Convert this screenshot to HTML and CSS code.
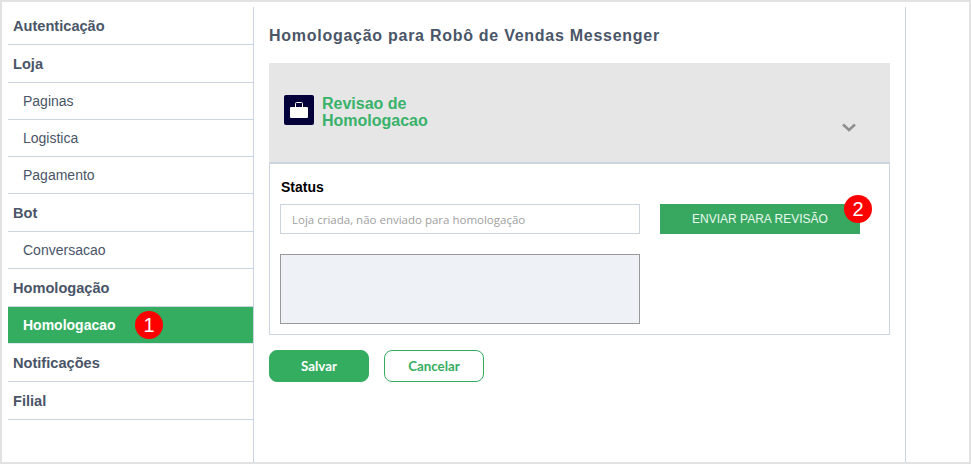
FILE: index.html
```html
<!DOCTYPE html>
<html lang="pt-BR">
<head>
    <meta charset="UTF-8">
    <meta name="viewport" content="width=device-width, initial-scale=1.0">
    <title>Homologação</title>
    <link rel="stylesheet" href="styles.css">
</head>
<body>

<div class="frame">
    <nav class="sidebar">
        <a class="item group">Autenticação</a>
        <a class="item group">Loja</a>
        <a class="item sub">Paginas</a>
        <a class="item sub">Logistica</a>
        <a class="item sub">Pagamento</a>
        <a class="item group">Bot</a>
        <a class="item sub">Conversacao</a>
        <a class="item group">Homologação</a>
        <a class="item sub active">Homologacao<span class="badge badge-menu">1</span></a>
        <a class="item group">Notificações</a>
        <a class="item group">Filial</a>
    </nav>

    <main class="content">
        <h1 class="title">Homologação para Robô de Vendas Messenger</h1>

        <section class="panel">
            <header class="panel-header">
                <div class="panel-icon">
                    <svg width="18" height="16" viewBox="0 0 18 16">
                        <path d="M5.5 5V1.5A1 1 0 0 1 6.5.5h5a1 1 0 0 1 1 1V5" fill="none" stroke="#fff" stroke-width="1"/>
                        <rect y="5" width="18" height="11" rx="1" fill="#fff"/>
                    </svg>
                </div>
                <div class="panel-title">Revisao de<br>Homologacao</div>
                <svg class="chevron" width="14" height="9" viewBox="0 0 14 9">
                    <path d="M1 1.5l6 5.5 6-5.5" fill="none" stroke="#8f8f8f" stroke-width="2.6"/>
                </svg>
            </header>

            <div class="panel-body">
                <label class="status-label">Status</label>
                <div class="status-row">
                    <input class="status-input" type="text" placeholder="Loja criada, não enviado para homologação" disabled>
                    <button class="send">ENVIAR PARA REVISÃO<span class="badge badge-send">2</span></button>
                </div>
                <textarea class="notes" disabled></textarea>
            </div>
        </section>

        <div class="actions">
            <button class="btn btn-save">Salvar</button>
            <button class="btn btn-cancel">Cancelar</button>
        </div>
    </main>
</div>

</body>
</html>
```

FILE: styles.css
```css
* {
    box-sizing: border-box;
}

body {
    margin: 0;
    font-family: "Liberation Sans", Arial, sans-serif;
    background-color: #fff;
}

.frame {
    display: flex;
    height: 464px;
    padding: 5px 0 0 6px;
    border: 2px solid #e2e2e2;
}

.sidebar {
    width: 246px;
    flex-shrink: 0;
    display: flex;
    flex-direction: column;
    border-right: 1px solid #cbd5e0;
}

.item {
    position: relative;
    display: flex;
    align-items: center;
    width: 245px;
    border-bottom: 1px solid #cbd5e0;
    color: #4a5568;
}

.group {
    height: 38px;
    padding-left: 5px;
    font-size: 14.6px;
    font-weight: bold;
}

.sub {
    height: 37px;
    padding-left: 15px;
    font-size: 14px;
}

.active {
    background-color: #34ad60;
    color: #fff;
    font-weight: bold;
    border-bottom: 1px solid #e2e8f0;
}

.badge {
    position: absolute;
    width: 28px;
    height: 28px;
    border-radius: 50%;
    background-color: #f00;
    color: #fff;
    font-family: "Liberation Sans", Arial, sans-serif;
    font-size: 20px;
    font-weight: normal;
    line-height: 28px;
    text-align: center;
}

.badge-menu {
    left: 127px;
    top: 4px;
}

.badge-send {
    right: -12px;
    top: -9px;
}

.content {
    width: 652px;
    flex-shrink: 0;
    padding: 0 15px;
    border-right: 1px solid #cbd5e0;
}

.title {
    margin: 20px 0 18px;
    font-size: 16px;
    line-height: 18px;
    font-weight: bold;
    letter-spacing: 0.73px;
    color: #4a5568;
}

.panel-header {
    position: relative;
    display: flex;
    align-items: center;
    height: 101px;
    padding: 0 0 6px 15px;
    background-color: #e6e6e6;
    border-bottom: 2px solid #cbd5e0;
}

.panel-icon {
    display: flex;
    align-items: center;
    justify-content: center;
    width: 30px;
    height: 30px;
    border-radius: 2px;
    background-color: #03003a;
}

.panel-title {
    margin: 4px 0 0 8px;
    font-size: 16px;
    line-height: 17px;
    font-weight: bold;
    color: #38b26a;
}

.chevron {
    position: absolute;
    right: 34px;
    top: 60px;
}

.panel-body {
    height: 171px;
    padding: 15px 0 0 10px;
    border: 1px solid #cbd5e0;
    border-top: 0;
}

.status-label {
    display: block;
    margin-left: 1px;
    font-size: 14px;
    line-height: 16px;
    font-weight: bold;
    color: #000;
}

.status-row {
    display: flex;
    gap: 20px;
    margin-top: 9px;
}

.status-input {
    width: 360px;
    height: 30px;
    padding: 0 11px;
    border: 1px solid #cbd5e0;
    background-color: #fff;
    font-family: "Open Sans", sans-serif;
    font-size: 11.5px;
}

.status-input::placeholder {
    color: #a0a0a0;
    opacity: 1;
}

.send {
    position: relative;
    width: 200px;
    height: 30px;
    border: 0;
    background-color: #38a860;
    color: #e8f8ee;
    font-family: "Liberation Sans", Arial, sans-serif;
    font-size: 12px;
}

.notes {
    display: block;
    width: 360px;
    height: 70px;
    margin-top: 20px;
    border: 1px solid #999;
    background-color: #eef1f6;
    resize: none;
}

.actions {
    display: flex;
    gap: 15px;
    margin-top: 15px;
}

.btn {
    width: 100px;
    height: 32px;
    border-radius: 8px;
    font-family: "Lato", sans-serif;
    font-size: 13.3px;
    font-weight: bold;
}

.btn-save {
    border: 1px solid #34ad60;
    background-color: #34ad60;
    color: #fff;
}

.btn-cancel {
    border: 1px solid #34ad60;
    background-color: #fff;
    color: #34ad60;
}
```
